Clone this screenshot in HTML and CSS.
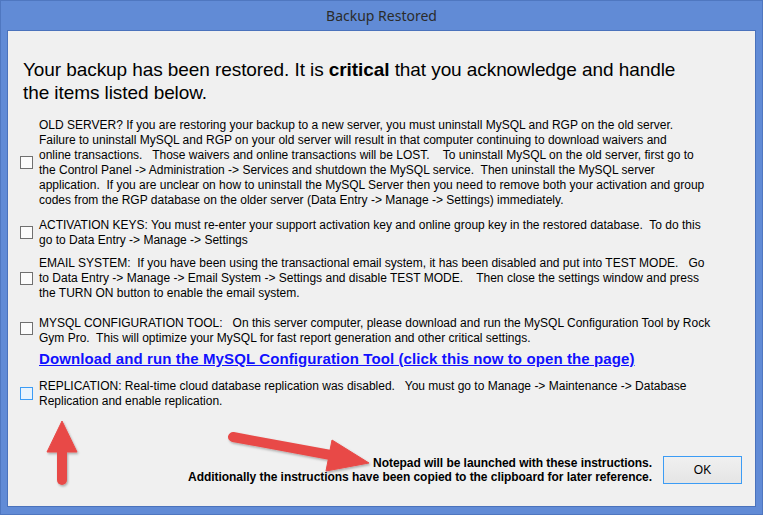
FILE: index.html
```html
<!DOCTYPE html>
<html>
<head>
<meta charset="utf-8">
<link rel="stylesheet" href="styles.css">
</head>
<body>
<div class="window">
  <div class="titlebar">Backup Restored</div>
  <div class="client">
    <h1 class="heading">Your backup has been restored. It is <b>critical</b> that you acknowledge and handle<br>the items listed below.</h1>

    <div class="item item-old">
      <span class="check"></span>
      <div class="label">OLD SERVER? If you are restoring your backup to a new server, you must uninstall MySQL and RGP on the old server.
Failure to uninstall MySQL and RGP on your old server will result in that computer continuing to download waivers and
online transactions.   Those waivers and online transactions will be LOST.    To uninstall MySQL on the old server, first go to
the Control Panel -&gt; Administration -&gt; Services and shutdown the MySQL service.  Then uninstall the MySQL server
application.  If you are unclear on how to uninstall the MySQL Server then you need to remove both your activation and group
codes from the RGP database on the older server (Data Entry -&gt; Manage -&gt; Settings) immediately.</div>
    </div>

    <div class="item item-keys">
      <span class="check"></span>
      <div class="label">ACTIVATION KEYS: You must re-enter your support activation key and online group key in the restored database.  To do this
go to Data Entry -&gt; Manage -&gt; Settings</div>
    </div>

    <div class="item item-email">
      <span class="check"></span>
      <div class="label">EMAIL SYSTEM:  If you have been using the transactional email system, it has been disabled and put into TEST MODE.   Go
to Data Entry -&gt; Manage -&gt; Email System -&gt; Settings and disable TEST MODE.    Then close the settings window and press
the TURN ON button to enable the email system.</div>
    </div>

    <div class="item item-mysql">
      <span class="check"></span>
      <div class="label">MYSQL CONFIGURATION TOOL:   On this server computer, please download and run the MySQL Configuration Tool by Rock
Gym Pro.  This will optimize your MySQL for fast report generation and other critical settings.</div>
    </div>
    <a class="link" href="#">Download and run the MySQL Configuration Tool (click this now to open the page)</a>

    <div class="item item-repl">
      <span class="check check-hot"></span>
      <div class="label">REPLICATION: Real-time cloud database replication was disabled.   You must go to Manage -&gt; Maintenance -&gt; Database
Replication and enable replication.</div>
    </div>

    <div class="footer">
      <div class="notice">Notepad will be launched with these instructions.<br>Additionally the instructions have been copied to the clipboard for later reference.</div>
      <button class="ok">OK</button>
    </div>

    <svg class="arrows" width="747" height="476" viewBox="8 30 747 476">
      <defs>
        <filter id="sh" x="-20%" y="-20%" width="140%" height="140%">
          <feDropShadow dx="1" dy="1.5" stdDeviation="1.2" flood-color="#000" flood-opacity="0.3"/>
        </filter>
      </defs>
      <g filter="url(#sh)" fill="#e84a47" stroke="#e84a47">
        <line x1="62" y1="446" x2="62" y2="479" stroke-width="10" stroke-linecap="round"/>
        <polygon points="62,420 47,451 77,451" stroke-width="1" stroke-linejoin="round"/>
        <line x1="233" y1="436" x2="336" y2="455" stroke-width="10" stroke-linecap="round"/>
        <polygon points="369,462 332,439 326,470" stroke-width="1" stroke-linejoin="round"/>
      </g>
    </svg>
  </div>
</div>
</body>
</html>
```

FILE: styles.css
```css
html, body {
  margin: 0;
  padding: 0;
  width: 763px;
  height: 515px;
  overflow: hidden;
}
.window {
  width: 763px;
  height: 515px;
  box-sizing: border-box;
  background: #618bd6;
  border: 1px solid #4f77c0;
  display: flex;
  flex-direction: column;
}
.titlebar {
  height: 28px;
  display: flex;
  align-items: center;
  justify-content: center;
  font-family: "Noto Sans", "Open Sans", sans-serif;
  font-size: 14px;
  color: #2b2b2b;
  padding-top: 1px;
}
.client {
  position: relative;
  margin: 0 6px 7px 6px;
  height: 476px;
  border: 1px solid #4a72bc;
  background: #f0f0f0;
  display: flex;
  flex-direction: column;
  font-family: "Liberation Sans", Arial, sans-serif;
  color: #000;
}
.heading {
  margin: 27px 0 0 15px;
  font-size: 19px;
  letter-spacing: -0.08px;
  font-weight: normal;
  line-height: 23px;
}
.heading b {
  font-weight: bold;
}
.item {
  display: flex;
  align-items: center;
  margin-left: 12px;
}
.item-old { margin-top: 14px; }
.item-keys { margin-top: 10px; }
.item-email { margin-top: 8px; }
.item-mysql { margin-top: 15px; }
.item-repl { margin-top: 12px; }
.check {
  flex: none;
  width: 11px;
  height: 11px;
  border: 1px solid #707070;
  background: #fcfcfc;
  margin-right: 6px;
}
.item-mysql .check {
  position: relative;
  top: -2px;
}
.check-hot {
  border-color: #3c9cf5;
  background: #e8f3fd;
}
.label {
  font-size: 12px;
  line-height: 15px;
  white-space: pre;
}
.link {
  display: block;
  margin: 4px 0 0 31px;
  font-size: 15px;
  letter-spacing: 0.11px;
  line-height: 17px;
  font-weight: bold;
  color: #1010ff;
  text-decoration: underline;
}
.footer {
  margin-top: auto;
  margin-bottom: 22px;
  display: flex;
  justify-content: flex-end;
  align-items: center;
}
.notice {
  font-size: 12px;
  letter-spacing: -0.05px;
  line-height: 14px;
  font-weight: bold;
  text-align: right;
  margin-right: 11px;
}
.ok {
  width: 79px;
  height: 28px;
  margin-right: 13px;
  border: 1px solid #3c9cf5;
  background: linear-gradient(#f0f0f0, #e5e5e5);
  font-family: "Liberation Sans", Arial, sans-serif;
  font-size: 12px;
  color: #000;
  padding: 0;
}
.arrows {
  position: absolute;
  left: 0;
  top: 0;
  pointer-events: none;
}
```
